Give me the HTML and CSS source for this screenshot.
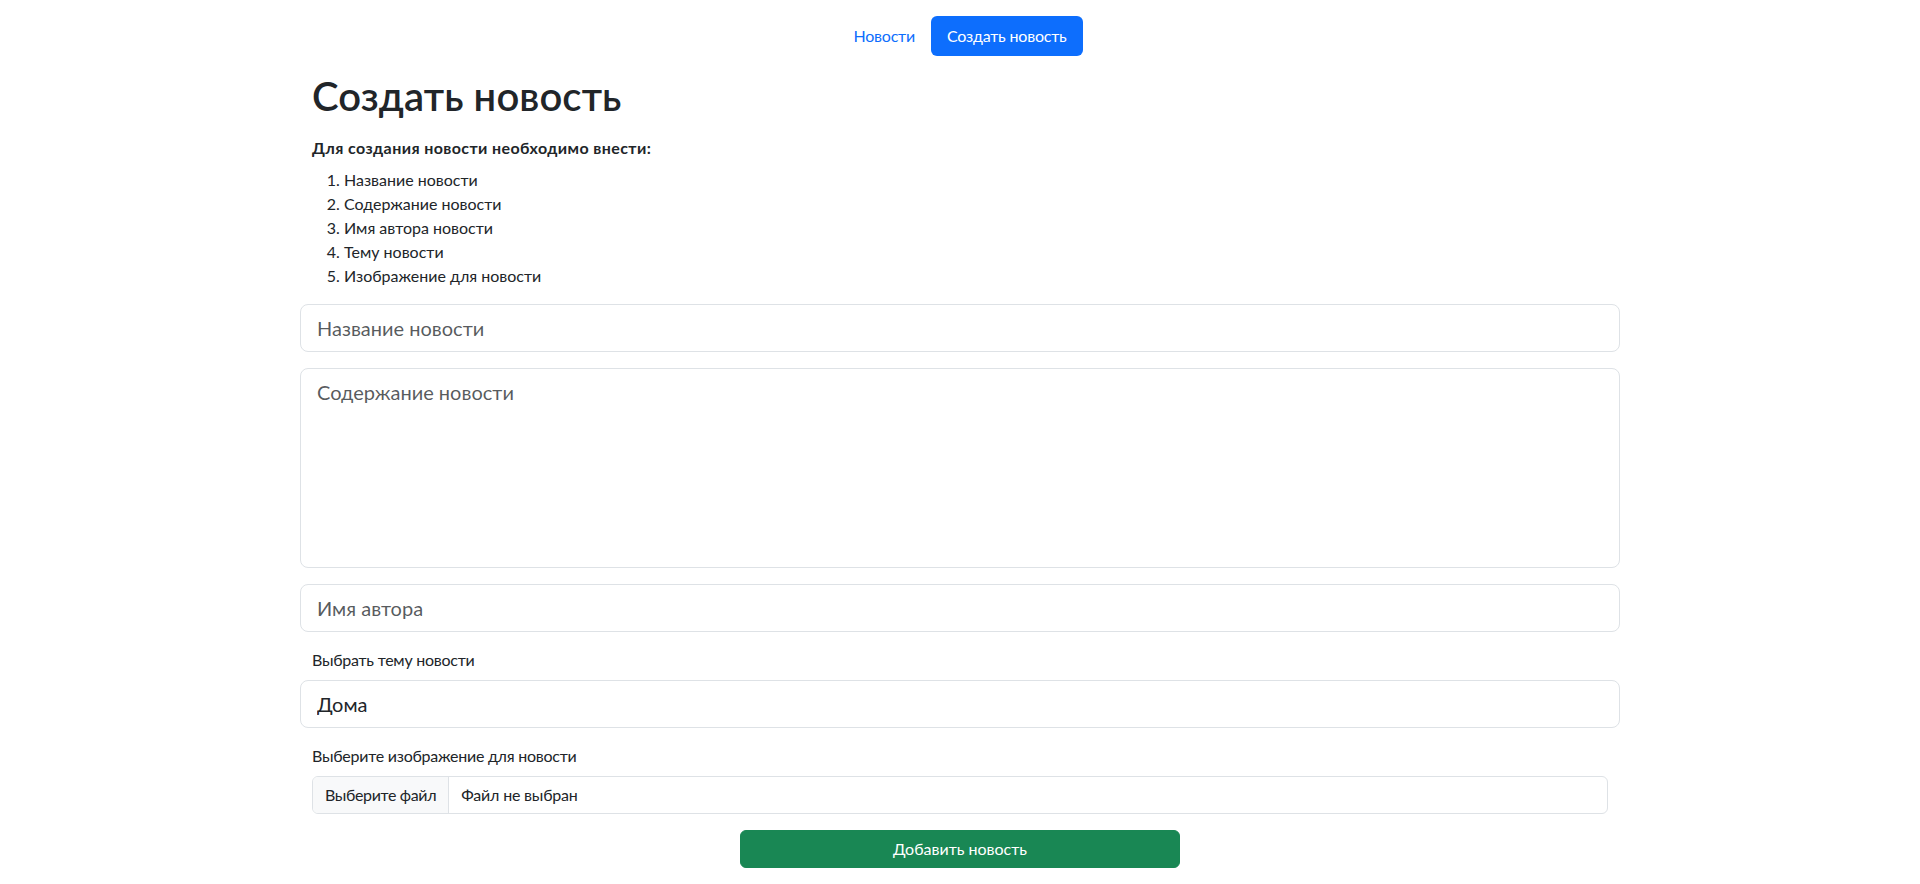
FILE: index.html
```html
<!DOCTYPE html>
<html lang="ru">
<head>
<meta charset="utf-8">
<title>Создать новость</title>
<link rel="stylesheet" href="styles.css">
</head>
<body>
<header class="header">
  <ul class="nav">
    <li><a class="nav-link" href="#">Новости</a></li>
    <li><a class="nav-link active" href="#">Создать новость</a></li>
  </ul>
</header>
<main class="container">
  <h1 class="title">Создать новость</h1>
  <p class="lead-note">Для создания новости необходимо внести:</p>
  <ol class="steps">
    <li>Название новости</li>
    <li>Содержание новости</li>
    <li>Имя автора новости</li>
    <li>Тему новости</li>
    <li>Изображение для новости</li>
  </ol>
  <form class="form-row">
    <input class="field" type="text" placeholder="Название новости">
    <textarea class="field area" placeholder="Содержание новости"></textarea>
    <input class="field" type="text" placeholder="Имя автора">
    <div class="group">
      <label class="label">Выбрать тему новости</label>
    </div>
    <select class="field select"><option>Дома</option></select>
    <div class="group">
      <label class="label">Выберите изображение для новости</label>
      <div class="file">
        <span class="file-btn">Выберите файл</span>
        <span class="file-name">Файл не выбран</span>
      </div>
    </div>
    <div class="submit-wrap">
      <button class="submit" type="button">Добавить новость</button>
    </div>
  </form>
</main>
</body>
</html>
```
FILE: styles.css
```css
* { box-sizing: border-box; }
body {
  margin: 0;
  font-family: Lato, "Noto Sans", sans-serif;
  font-size: 16px;
  line-height: 1.5;
  color: #212529;
  background: #fff;
}
.header {
  display: flex;
  justify-content: center;
  padding: 16px 0;
}
.nav {
  display: flex;
  list-style: none;
  margin: 0;
  padding: 0;
}
.nav-link {
  display: block;
  padding: 8px 16px;
  color: #0d6efd;
  text-decoration: none;
  border-radius: 6px;
  letter-spacing: -0.2px;
}
.nav-link.active {
  background: #0d6efd;
  color: #fff;
}
.container {
  max-width: 1320px;
  margin: 0 auto;
  padding: 0 12px;
}
.title {
  margin: 0 0 16px;
  font-size: 40px;
  font-weight: 600;
  line-height: 1.2;
  letter-spacing: 0.1px;
}
.lead-note {
  margin: 0 0 8px;
  font-weight: 700;
  letter-spacing: 0.4px;
}
.steps {
  margin: 0 0 16px;
  padding-left: 32px;
}
.form-row {
  display: flex;
  flex-direction: column;
  margin: 0 -12px;
}
.field {
  display: block;
  width: 100%;
  margin: 0 0 16px;
  padding: 8px 16px;
  font-family: inherit;
  font-size: 20px;
  line-height: 1.5;
  color: #212529;
  background: #fff;
  border: 1px solid #dee2e6;
  border-radius: 8px;
  outline: none;
}
.field::placeholder { color: rgba(33, 37, 41, 0.75); opacity: 1; }
.area {
  height: 200px;
  resize: none;
}
.select {
  appearance: none;
  -webkit-appearance: none;
}
.group {
  padding: 0 12px;
}
.label {
  display: block;
  margin-bottom: 8px;
  letter-spacing: -0.25px;
}
.file {
  display: flex;
  height: 38px;
  margin-bottom: 16px;
  border: 1px solid #dee2e6;
  border-radius: 6px;
  overflow: hidden;
  background: #fff;
}
.file-btn {
  padding: 6px 12px;
  background: #f8f9fa;
  border-right: 1px solid #dee2e6;
  letter-spacing: -0.35px;
}
.file-name {
  padding: 6px 12px;
  letter-spacing: -0.2px;
}
.submit-wrap {
  display: flex;
  justify-content: center;
}
.submit {
  width: 440px;
  height: 38px;
  padding: 6px 12px;
  font-family: inherit;
  font-size: 16px;
  line-height: 1.5;
  color: #fff;
  background: #198754;
  border: 1px solid #198754;
  border-radius: 6px;
}
```
